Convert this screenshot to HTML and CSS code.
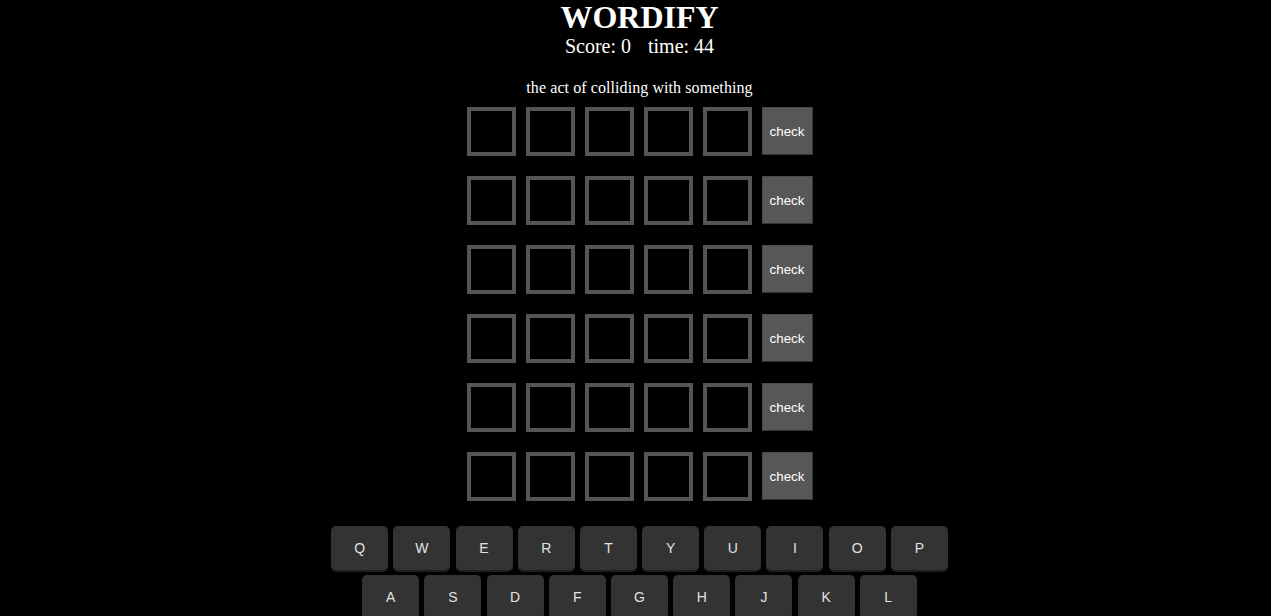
FILE: index.html
```html
<!DOCTYPE html>
<html lang="en">
<head>
<meta charset="utf-8">
<title>Wordify</title>
<link rel="stylesheet" href="styles.css">
</head>
<body>
<div class="app">
  <h1 class="title">WORDIFY</h1>
  <div class="stats"><span>Score: 0</span><span>time: 44</span></div>
  <p class="hint">the act of colliding with something</p>
  <div class="board">
    <div class="row"><div class="cell"></div><div class="cell"></div><div class="cell"></div><div class="cell"></div><div class="cell"></div><button class="check">check</button></div>
    <div class="row"><div class="cell"></div><div class="cell"></div><div class="cell"></div><div class="cell"></div><div class="cell"></div><button class="check">check</button></div>
    <div class="row"><div class="cell"></div><div class="cell"></div><div class="cell"></div><div class="cell"></div><div class="cell"></div><button class="check">check</button></div>
    <div class="row"><div class="cell"></div><div class="cell"></div><div class="cell"></div><div class="cell"></div><div class="cell"></div><button class="check">check</button></div>
    <div class="row"><div class="cell"></div><div class="cell"></div><div class="cell"></div><div class="cell"></div><div class="cell"></div><button class="check">check</button></div>
    <div class="row"><div class="cell"></div><div class="cell"></div><div class="cell"></div><div class="cell"></div><div class="cell"></div><button class="check">check</button></div>
  </div>
  <div class="keyboard">
    <div class="krow">
      <button class="key">Q</button><button class="key">W</button><button class="key">E</button><button class="key">R</button><button class="key">T</button><button class="key">Y</button><button class="key">U</button><button class="key">I</button><button class="key">O</button><button class="key">P</button>
    </div>
    <div class="krow">
      <button class="key">A</button><button class="key">S</button><button class="key">D</button><button class="key">F</button><button class="key">G</button><button class="key">H</button><button class="key">J</button><button class="key">K</button><button class="key">L</button>
    </div>
  </div>
</div>
</body>
</html>
```

FILE: styles.css
```css
html, body {
  margin: 0;
  background: #000;
}

body {
  color: #fff;
  font-family: "Liberation Serif", "Times New Roman", serif;
}

.app {
  padding-left: 8px;
  text-align: center;
}

.title {
  margin: 0;
  font-size: 32px;
  line-height: 35px;
  font-weight: bold;
}

.stats {
  display: flex;
  justify-content: center;
  gap: 17px;
  font-size: 20px;
  line-height: 23px;
}

.hint {
  margin: 21px 0 0;
  font-size: 16px;
  line-height: 18px;
  letter-spacing: 0.08px;
}

.board {
  margin-top: 10px;
  display: flex;
  flex-direction: column;
  gap: 20px;
}

.row {
  display: flex;
  justify-content: center;
  gap: 10px;
}

.cell {
  box-sizing: border-box;
  width: 49px;
  height: 49px;
  border: 4px solid #555;
  background: #000;
}

.check {
  box-sizing: border-box;
  width: 51px;
  height: 48px;
  padding: 0;
  background: #575757;
  color: #fff;
  border: 1px solid #4a4a4a;
  border-right-color: #333;
  border-bottom-color: #333;
  font-family: "Liberation Sans", Arial, sans-serif;
  font-size: 13.333px;
}

.keyboard {
  margin-top: 25px;
  display: flex;
  flex-direction: column;
  align-items: center;
  gap: 5px;
}

.krow {
  display: flex;
  justify-content: center;
  gap: 5.2px;
}

.key {
  width: 57px;
  height: 44px;
  padding: 0;
  border: none;
  border-radius: 5px;
  background: #333;
  box-shadow: 0 2px 0 #1e1e1e;
  color: #e2e2e2;
  font-family: "Liberation Sans", Arial, sans-serif;
  font-size: 14px;
}
```
